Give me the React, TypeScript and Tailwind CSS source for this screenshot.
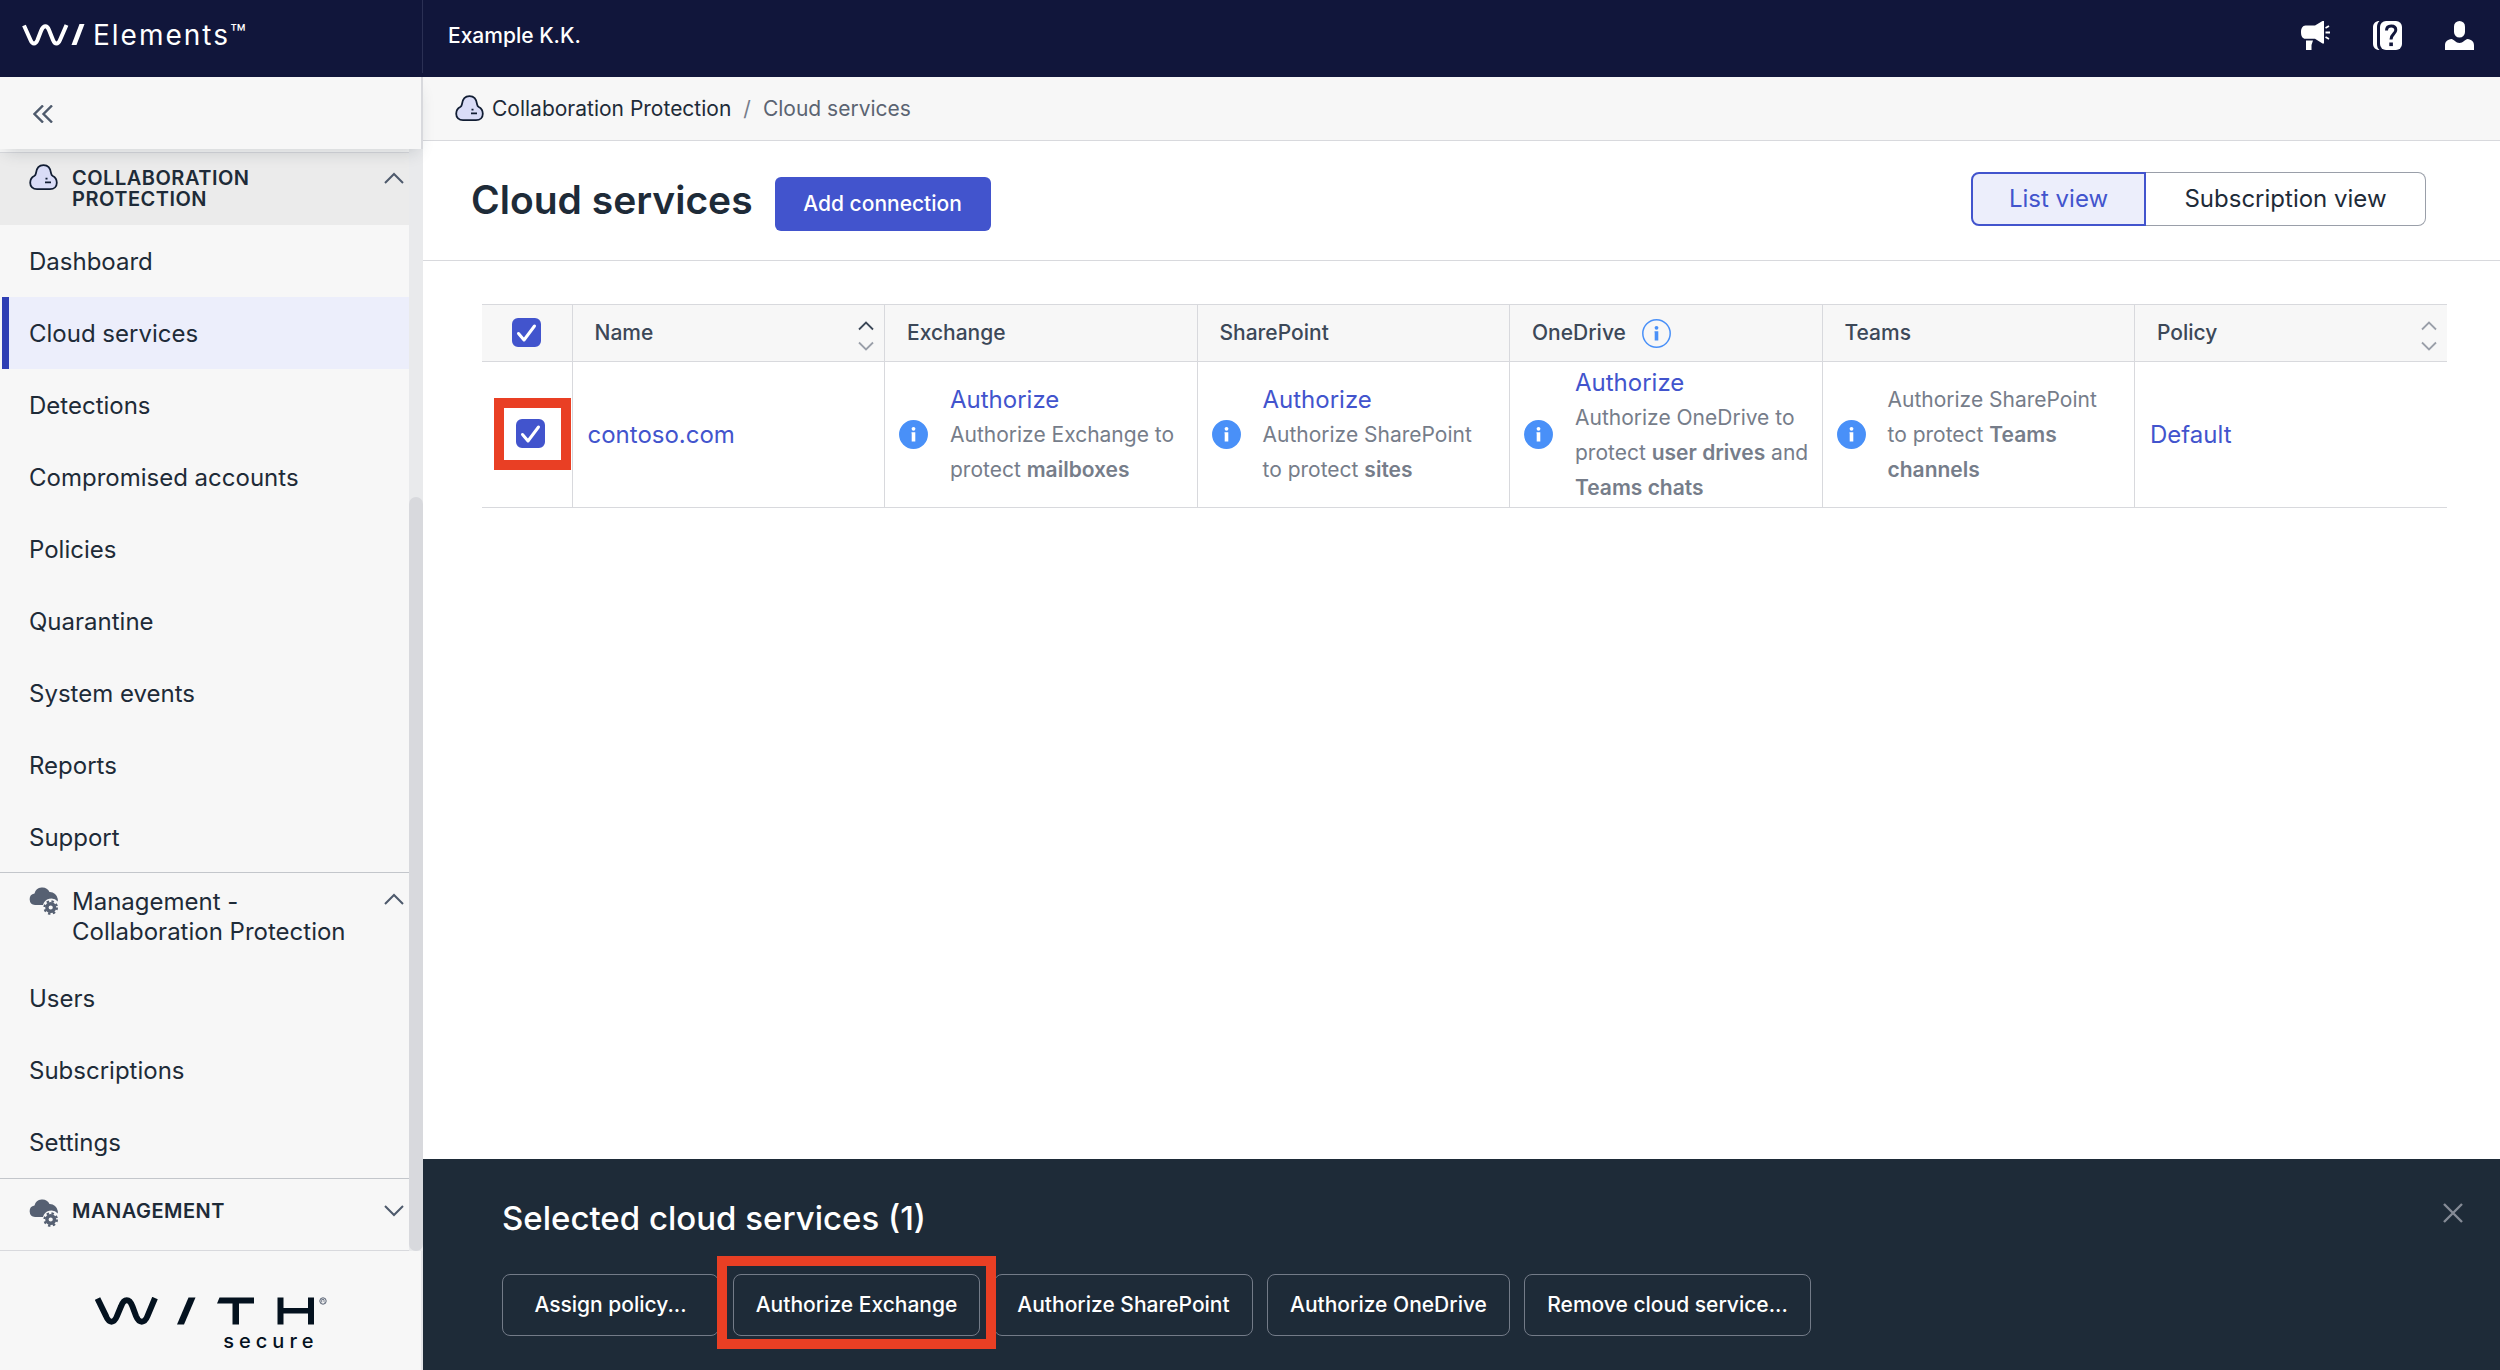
import type { ReactNode } from "react";

function CloudIcon() {
  return (
    <svg viewBox="0 0 29 27" className="h-[27px] w-[29px] shrink-0" aria-hidden="true">
      <path
        d="M8 25.2C3.8 25.2 1.2 22.6 1.2 18.8C1.2 15.6 2.9 13.200 5.200 12C6.400 11.300 6.700 10.600 6.900 9.300C7.500 4.500 10.300 1.200 14.500 1.200C18.700 1.200 21.500 4.500 22.100 9.300C22.300 10.600 22.600 11.300 23.800 12C26.100 13.200 27.800 15.600 27.800 18.800C27.800 22.600 25.200 25.200 21 25.200Z"
        fill="#d9dcf7"
        stroke="#111d33"
        strokeWidth="1.800"
      />
      <path d="M16 18.300h6M16.500 14.700h2" stroke="#111d33" strokeWidth="1.800" />
    </svg>
  );
}

function CloudGearIcon() {
  return (
    <svg viewBox="0 0 29 29" className="size-[29px] shrink-0" aria-hidden="true">
      <path
        d="M6 18A5.800 5.800 0 0 1 5.500 6.500A8 8 0 0 1 20.500 5A8 8 0 0 1 28.800 12V14.500A8.500 8.500 0 0 0 14 18Z"
        fill="#566072"
      />
      <circle cx="21.700" cy="20.500" r="3.800" fill="none" stroke="#566072" strokeWidth="3.400" />
      <circle cx="21.700" cy="20.500" r="6.200" fill="none" stroke="#566072" strokeWidth="2.200" strokeDasharray="2.435 2.435" />
    </svg>
  );
}

function Chevron({ down = false }: { down?: boolean }) {
  return (
    <svg viewBox="0 0 20 12" className="h-3 w-5 shrink-0" fill="none" stroke="#4e5a6c" strokeWidth="2" aria-hidden="true">
      <path d={down ? "M1 1L10 10L19 1" : "M1 11L10 2L19 11"} />
    </svg>
  );
}

function SortIcon({ active = false }: { active?: boolean }) {
  return (
    <svg viewBox="0 0 16 36" className="h-9 w-4 shrink-0" fill="none" strokeWidth="1.800" aria-hidden="true">
      <path d="M1 14.500L8 7.500L15 14.500" stroke={active ? "#3c4858" : "#9a9fa9"} />
      <path d="M1 27.500L8 34.500L15 27.500" stroke="#9a9fa9" />
    </svg>
  );
}

function InfoIcon({ outline = false }: { outline?: boolean }) {
  const ink = outline ? "#4990f8" : "#ffffff";
  return (
    <svg viewBox="0 0 29 29" className="size-[29px] shrink-0" aria-hidden="true">
      <circle cx="14.500" cy="14.500" r="13.700" fill={outline ? "none" : "#4990f8"} stroke="#4990f8" strokeWidth="1.500" />
      <circle cx="14.500" cy="8.800" r="1.900" fill={ink} />
      <path d="M12.500 12.200H16.300V21.500H12.700V13.500H12.500Z" fill={ink} />
    </svg>
  );
}

function Check({ label }: { label: string }) {
  return (
    <span className="inline-grid place-items-center">
      <input
        type="checkbox"
        defaultChecked
        aria-label={label}
        className="peer col-start-1 row-start-1 size-[29px] appearance-none rounded-md border-2 border-[#4254cd] bg-white checked:bg-[#4254cd]"
      />
      <svg viewBox="0 0 29 29" className="pointer-events-none invisible col-start-1 row-start-1 size-[29px] peer-checked:visible" aria-hidden="true">
        <path d="M6.500 15.500L12 22L22.500 8" fill="none" stroke="#fff" strokeWidth="3" strokeLinecap="round" strokeLinejoin="round" />
      </svg>
    </span>
  );
}

function Header() {
  return (
    <header className="flex h-[77px] shrink-0 bg-[#11163b] text-white">
      <a href="#home" className="mb-1 flex w-[423px] shrink-0 items-start border-r border-[#2b3054] pt-[17px] pl-[22px]">
        <svg viewBox="0 0 63 22" className="mt-[7px] h-[22px] w-[63px]" aria-label="W/" role="img">
          <path d="M2 1.500L8.500 16C10.500 20.800 13.500 20.800 15.500 16L19 7C21.300 .8 25 .8 27 6L31 16C33 20.800 36 20.800 38 16L44.500 1" fill="none" stroke="#fff" strokeWidth="4" />
          <path d="M57.500 0H62.500L54.500 21H49.500Z" fill="#fff" />
        </svg>
        <span className="pl-2 text-[28px] leading-9 tracking-[2px]">Elements</span>
        <span className="text-[26px] leading-[34px]">™</span>
      </a>
      <div className="flex flex-1 items-start justify-between pt-5 pr-[26px] pl-[25px]">
        <span className="text-[21px] leading-8 font-medium">Example K.K.</span>
        <div className="flex gap-[43px] pt-px">
          <button type="button" aria-label="Announcements">
            <svg viewBox="0 0 29 29" className="size-[29px]" fill="#fff" aria-hidden="true">
              <path d="M4.500 4.500H14L21.500 0H23V22.500H21.500L14 17.800H4.500C1.500 17.800 0 15 0 11.200C0 7.500 1.500 4.500 4.500 4.500ZM5 19.500H12L10.500 24V29H5Z" />
              <path d="M24.500 7L28 5M24.500 11.500H29M24.500 16L28 18" stroke="#fff" strokeWidth="1.800" />
            </svg>
          </button>
          <button type="button" aria-label="Help">
            <svg viewBox="0 0 29 29" className="size-[29px]" aria-hidden="true">
              <path d="M6.500 0C2.500 0 0 2.500 0 6.500V22.500C0 26.500 2.500 29 6.500 29C4.800 27.500 4 25.500 4 23V6C4 3.500 4.800 1.500 6.500 0Z" fill="#fff" />
              <rect x="7" width="22" height="29" rx="6" fill="#fff" />
              <path d="M13.500 9.500C13.500 6.500 15.300 5 18.200 5C21 5 22.800 6.500 22.800 9C22.800 13 18 13 18 18.500" fill="none" stroke="#11163b" strokeWidth="3" />
              <rect x="16.300" y="21.500" width="3.600" height="3.600" fill="#11163b" />
            </svg>
          </button>
          <button type="button" aria-label="Account">
            <svg viewBox="0 0 29 29" className="size-[29px]" fill="#fff" aria-hidden="true">
              <rect x="9" width="11" height="16.500" rx="5.500" />
              <path d="M0 29V24.500C0 20.500 2.500 18.500 6.500 18C8.500 18 11 22 14.500 22C18 22 20.500 18 22.500 18C26.500 18.500 29 20.500 29 24.500V29Z" />
            </svg>
          </button>
        </div>
      </div>
    </header>
  );
}

function NavItem({ children, active = false }: { children: ReactNode; active?: boolean }) {
  return (
    <li>
      <a
        href="#nav"
        aria-current={active ? "page" : undefined}
        className={
          active
            ? "ml-0.5 flex h-[72px] items-center border-l-[7px] border-[#2f3fb4] bg-[#eceefb] pt-0.5 pl-5"
            : "flex h-[72px] items-center pt-0.5 pl-[29px]"
        }
      >
        {children}
      </a>
    </li>
  );
}

function Sidebar() {
  return (
    <aside className="flex w-[423px] shrink-0 flex-col bg-[#f7f7f7] text-2xl text-[#1e2b38]">
      <div className="z-10 flex h-[72px] items-center border-r-2 border-[#d8d9dd] bg-[#f7f7f7] pt-0.5 pl-[33px] shadow-[0_8px_16px_-6px_rgba(30,43,56,0.2)]">
        <button type="button" aria-label="Collapse menu">
          <svg viewBox="0 0 20 18" className="h-[18px] w-5" fill="none" stroke="#4e5a6c" strokeWidth="2.400" aria-hidden="true">
            <path d="M10 0.500L1.500 9L10 17.500M19 0.500L10.500 9L19 17.500" />
          </svg>
        </button>
      </div>
      <div className="flex">
        <nav className="flex-1 pt-[3px]">
          <button type="button" className="flex h-[73px] w-full items-start border-t border-[#d8d9dd] bg-[#ebebeb] pt-[11px] pr-[5px] pl-[29px] text-left">
            <CloudIcon />
            <span className="ml-3.5 flex-1 pt-1 pr-24 text-xl leading-[21px] font-semibold tracking-wide">COLLABORATION PROTECTION</span>
            <span className="flex pt-2"><Chevron /></span>
          </button>
          <ul>
            <NavItem>Dashboard</NavItem>
            <NavItem active>Cloud services</NavItem>
            <NavItem>Detections</NavItem>
            <NavItem>Compromised accounts</NavItem>
            <NavItem>Policies</NavItem>
            <NavItem>Quarantine</NavItem>
            <NavItem>System events</NavItem>
            <NavItem>Reports</NavItem>
            <NavItem>Support</NavItem>
          </ul>
          <button type="button" className="-mt-px flex h-[90px] w-full items-start border-t border-[#c3c6cb] pt-3.5 pr-[5px] pl-[29px] text-left">
            <CloudGearIcon />
            <span className="ml-3.5 flex-1 leading-[30px]">Management -<br />Collaboration Protection</span>
            <span className="flex pt-1.5"><Chevron /></span>
          </button>
          <ul>
            <NavItem>Users</NavItem>
            <NavItem>Subscriptions</NavItem>
            <NavItem>Settings</NavItem>
          </ul>
          <button type="button" className="flex h-[73px] w-full items-start border-y border-t-[#c3c6cb] border-b-[#d8d9dd] pt-5 pr-[5px] pl-[29px] text-left">
            <CloudGearIcon />
            <span className="ml-3.5 flex-1 text-xl leading-6 font-semibold tracking-wide">MANAGEMENT</span>
            <span className="flex pt-1.5"><Chevron down /></span>
          </button>
        </nav>
        <div className="flex w-3.5 flex-col justify-end bg-[#e9eaec]">
          <div className="h-13/19 rounded-full bg-[#d8d9dd]" />
        </div>
      </div>
      <div className="flex flex-1 flex-col items-center border-r-2 border-[#e3e4e7] pt-[46px]">
        <div className="flex w-[232px] flex-col text-[#04121f]">
          <svg viewBox="0 0 232 28" className="h-7 w-[232px]" role="img" aria-label="WITH">
            <path d="M2.500 1.500L11 19C14 26.500 19 26.500 22 19L26 9.500C29 1 34.500 1 37.500 9.500L41 19C44 26.500 49.500 26.500 52.500 19L60 1" fill="none" stroke="#04121f" strokeWidth="6" />
            <path d="M93.500 0.500H100.500L89 27.500H82Z" fill="#04121f" />
            <path d="M124.500 0.500H159V6.500H144V27.500H137.500V6.500H122Z" fill="#04121f" />
            <path d="M182.500 0.500H188.500V11H213V0.500H219V27.500H213V16.500H188.500V27.500H182.500Z" fill="#04121f" />
            <circle cx="228" cy="4" r="3.200" fill="none" stroke="#566072" />
            <path d="M226.700 5.500V2.500H229V4.500L229.500 5.500" fill="none" stroke="#566072" strokeWidth=".8" />
          </svg>
          <span className="pt-1 pr-2 text-right text-xl leading-6 font-medium tracking-[5px]">secure</span>
        </div>
      </div>
    </aside>
  );
}

function ServiceCell({ title, children }: { title?: string; children: ReactNode }) {
  return (
    <td className="border-l border-[#d8d9dd] pl-3.5">
      <div className="flex items-center gap-[22px]">
        <InfoIcon />
        <div className="text-[21px] leading-[35px] whitespace-nowrap text-[#767d8a]">
          {title && <a href="#authorize" className="block text-2xl leading-[35px] text-[#4254cd]">{title}</a>}
          {children}
        </div>
      </div>
    </td>
  );
}

const TH = "border-l border-[#d8d9dd] pr-2.5 pl-[22px] text-left font-medium";
const TERM = "font-semibold";

function ServicesTable() {
  return (
    <table className="w-full table-fixed border-collapse border-y border-[#d8d9dd]">
      <colgroup>
        <col className="w-[90px]" />
        <col />
        <col />
        <col />
        <col />
        <col />
        <col />
      </colgroup>
      <thead className="bg-[#f7f7f7] text-[21px] text-[#3c4858]">
        <tr className="h-[57px] border-b border-[#d8d9dd]">
          <th>
            <div className="flex justify-center pb-0.5"><Check label="Select all" /></div>
          </th>
          <th className={TH}><div className="flex items-center justify-between">Name<SortIcon active /></div></th>
          <th className={TH}>Exchange</th>
          <th className={TH}>SharePoint</th>
          <th className={TH}><div className="flex items-center gap-4">OneDrive<InfoIcon outline /></div></th>
          <th className={TH}>Teams</th>
          <th className={TH}><div className="flex items-center justify-between">Policy<SortIcon /></div></th>
        </tr>
      </thead>
      <tbody>
        <tr className="h-[146px]">
          <td className="pb-0.5">
            <div className="ml-3 flex h-[72px] w-[77px] items-center justify-center border-[10px] border-[#e93f24] pr-1">
              <Check label="Select contoso.com" />
            </div>
          </td>
          <td className="border-l border-[#d8d9dd] pl-[15px] text-2xl text-[#4254cd]"><a href="#contoso">contoso.com</a></td>
          <ServiceCell title="Authorize">Authorize Exchange to<br />protect <b className={TERM}>mailboxes</b></ServiceCell>
          <ServiceCell title="Authorize">Authorize SharePoint<br />to protect <b className={TERM}>sites</b></ServiceCell>
          <ServiceCell title="Authorize">Authorize OneDrive to<br />protect <b className={TERM}>user drives</b> and<br /><b className={TERM}>Teams chats</b></ServiceCell>
          <ServiceCell>Authorize SharePoint<br />to protect <b className={TERM}>Teams<br />channels</b></ServiceCell>
          <td className="border-l border-[#d8d9dd] pl-[15px] text-2xl text-[#4254cd]"><a href="#policy">Default</a></td>
        </tr>
      </tbody>
    </table>
  );
}

const ACTION = "h-[62px] rounded-lg border border-[#737b88] text-center whitespace-nowrap";

function SelectionPanel() {
  return (
    <section className="bg-[#1e2b38] pt-9 pr-[37px] pb-[34px] pl-[79px] text-white">
      <div className="flex items-start justify-between">
        <h2 className="text-[33px] leading-[46px] font-medium">Selected cloud services (1)</h2>
        <button type="button" aria-label="Close" className="pt-2">
          <svg viewBox="0 0 20 20" className="size-5" stroke="#858b96" strokeWidth="2.400" aria-hidden="true">
            <path d="M1 1L19 19M19 1L1 19" />
          </svg>
        </button>
      </div>
      <div className="mt-[33px] flex gap-3.5 text-[21px] font-medium">
        <button type="button" className={`${ACTION} w-[217px]`}>Assign policy...</button>
        <div className="relative flex">
          <button type="button" className={`${ACTION} w-[247px]`}>Authorize Exchange</button>
          <div className="pointer-events-none absolute -inset-x-4 -top-[18px] -bottom-[13px] border-[10px] border-[#e93f24]" />
        </div>
        <button type="button" className={`${ACTION} w-[259px]`}>Authorize SharePoint</button>
        <button type="button" className={`${ACTION} w-[243px]`}>Authorize OneDrive</button>
        <button type="button" className={`${ACTION} w-[287px]`}>Remove cloud service...</button>
      </div>
    </section>
  );
}

export default function App() {
  return (
    <div className="flex min-h-screen flex-col bg-white font-['Inter','Liberation_Sans',sans-serif] text-[#1e2b38]">
      <Header />
      <div className="flex flex-1">
        <Sidebar />
        <main className="flex min-w-0 flex-1 flex-col">
          <nav aria-label="Breadcrumb" className="flex h-16 items-center border-b border-[#d8d9dd] bg-[#f7f7f7] pl-8 text-[21px]">
            <CloudIcon />
            <a href="#collaboration" className="ml-2">Collaboration Protection</a>
            <span className="mx-3 text-[#767d8a]">/</span>
            <span className="text-[#5b6472]">Cloud services</span>
          </nav>
          <div className="flex h-[120px] items-start border-b border-[#d8d9dd] pr-[74px] pl-12">
            <h1 className="pt-[34px] text-[39px] leading-[50px] font-semibold">Cloud services</h1>
            <button type="button" className="mt-9 ml-[22px] h-[54px] w-[216px] rounded-md bg-[#4254cd] text-[21px] font-medium text-white">Add connection</button>
            <div className="mt-[31px] ml-auto flex h-[54px] text-2xl">
              <button type="button" className="w-[175px] rounded-l-lg border-2 border-[#4254cd] bg-[#eceefb] text-[#4254cd]">List view</button>
              <button type="button" className="w-[280px] rounded-r-lg border border-l-0 border-[#9a9fa9]">Subscription view</button>
            </div>
          </div>
          <div className="flex-1 pt-[43px] pr-[53px] pl-[59px]">
            <ServicesTable />
          </div>
          <SelectionPanel />
        </main>
      </div>
    </div>
  );
}
